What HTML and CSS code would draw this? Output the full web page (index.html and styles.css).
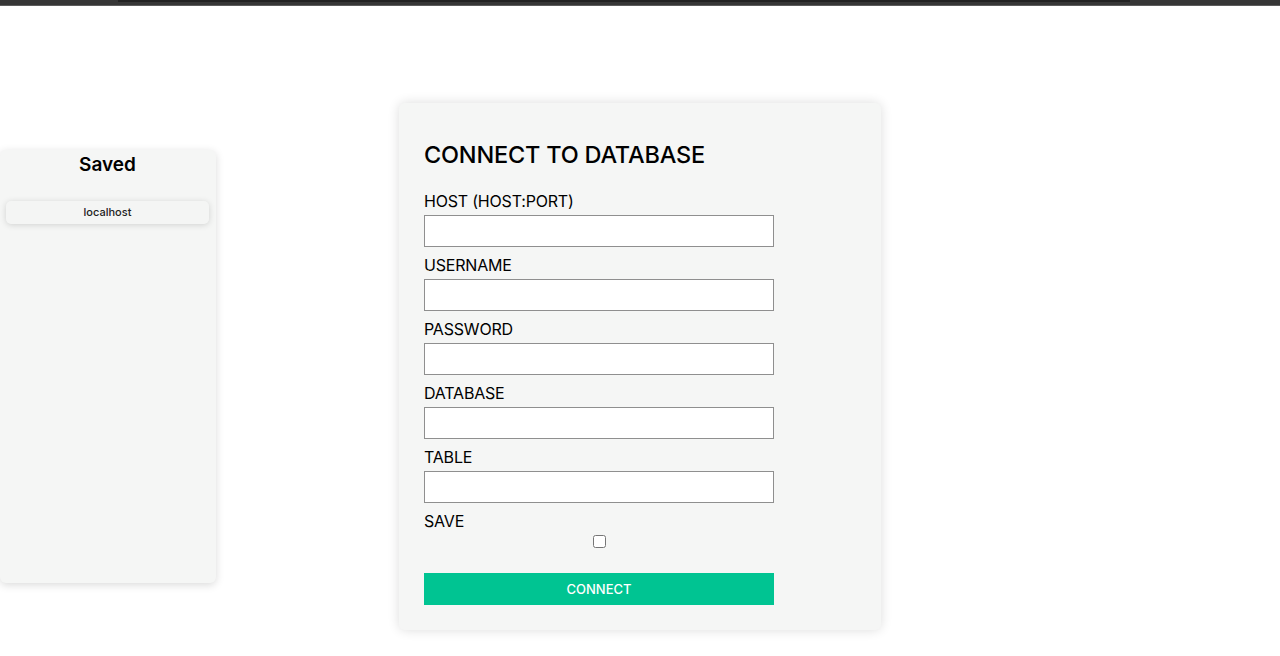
FILE: index.html
```html
<!DOCTYPE html>
<html>
<head>
<meta charset="utf-8">
<link rel="stylesheet" href="styles.css">
</head>
<body>
<div class="topbar"><div class="topbar-inner"></div></div>
<main class="layout">
  <aside class="saved">
    <h3 class="saved-title">Saved</h3>
    <div class="saved-item">localhost</div>
  </aside>
  <form class="card">
    <h2 class="card-title">CONNECT TO DATABASE</h2>
    <label class="field-label">HOST (HOST:PORT)</label>
    <input class="field-input" type="text">
    <label class="field-label">USERNAME</label>
    <input class="field-input" type="text">
    <label class="field-label">PASSWORD</label>
    <input class="field-input" type="password">
    <label class="field-label">DATABASE</label>
    <input class="field-input" type="text">
    <label class="field-label">TABLE</label>
    <input class="field-input" type="text">
    <label class="field-label">SAVE</label>
    <div class="check-row"><input type="checkbox" class="check"></div>
    <button type="button" class="connect">CONNECT</button>
  </form>
</main>
</body>
</html>
```
FILE: styles.css
```css
* { box-sizing: border-box; }
html, body {
  margin: 0;
  padding: 0;
  background: #ffffff;
  font-family: "Inter", "Open Sans", sans-serif;
  color: #000;
}
.topbar {
  height: 6px;
  background: #363636;
  border-bottom: 1px solid #5c5c5c;
}
.topbar-inner {
  margin: 0 150px 0 118px;
  height: 2px;
  background: #222;
}
.layout {
  display: grid;
  grid-template-columns: 1fr 482px 1fr;
  align-items: start;
  padding-top: 97px;
}
.saved {
  justify-self: start;
  width: 216px;
  height: 433px;
  margin-top: 47px;
  background: #f5f6f5;
  border-radius: 6px;
  box-shadow: 0 2px 8px rgba(0,0,0,0.15);
  padding: 0 7px 0 6px;
}
.saved-title {
  margin: 0;
  text-align: center;
  font-size: 19px;
  font-weight: 600;
  line-height: 30px;
}
.saved-item {
  margin-top: 21px;
  height: 23px;
  line-height: 23px;
  text-align: center;
  font-size: 11px;
  font-weight: 500;
  color: #222;
  background: #f4f5f4;
  border-radius: 5px;
  box-shadow: 0 1px 6px rgba(0,0,0,0.15);
}
.card {
  background: #f5f6f5;
  border-radius: 6px;
  box-shadow: 0 0 12px rgba(0,0,0,0.14);
  padding: 25px;
  margin-bottom: 20px;
  display: flex;
  flex-direction: column;
  align-items: flex-start;
}
.card-title {
  margin: 9px 0 18px;
  font-size: 23.5px;
  font-weight: 500;
  line-height: 36px;
  letter-spacing: -0.2px;
}
.field-label {
  font-size: 16px;
  line-height: 20px;
  margin-bottom: 4px;
  font-weight: 400;
  letter-spacing: -0.2px;
}
.field-input {
  width: 350px;
  height: 32px;
  margin: 0 0 8px;
  border: 1px solid #8f8f8f;
  background: #fff;
  border-radius: 0;
  font-size: 14px;
  padding: 2px 6px;
}
.check-row {
  width: 350px;
  display: flex;
  justify-content: center;
}
.check {
  width: 13px;
  height: 13px;
  margin: 0;
}
.connect {
  margin-top: 25px;
  width: 350px;
  height: 32px;
  border: none;
  background: #00c492;
  color: #fff;
  font-family: inherit;
  font-size: 13px;
  font-weight: 500;
  cursor: pointer;
}
```
